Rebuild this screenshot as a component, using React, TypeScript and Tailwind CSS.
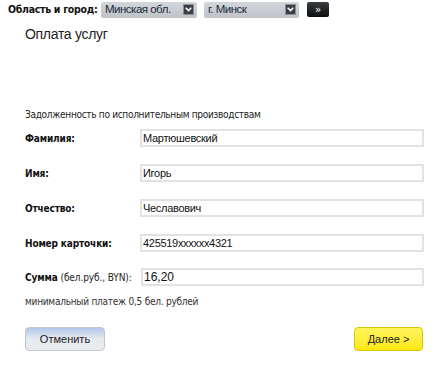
import { useState } from "react";

const fields = [
  { label: "Фамилия:", value: "Мартюшевский" },
  { label: "Имя:", value: "Игорь" },
  { label: "Отчество:", value: "Чеславович" },
  { label: "Номер карточки:", value: "425519xxxxxx4321" },
];

function Select({ value, width }: { value: string; width: string }) {
  return (
    <div
      className={`${width} h-[16px] shrink-0 flex items-center justify-between rounded-[2px] bg-gradient-to-b from-[#d3d6da] to-[#bfc3c8] pl-[4px] pr-[3px]`}
    >
      <span className="text-[11.5px] leading-none text-[#1c2a3a] font-['Liberation_Sans',sans-serif] tracking-[-0.5px]">
        {value}
      </span>
      <span className="w-[11px] h-[11px] bg-[#3a3f45] border border-[#8a8f95] flex items-center justify-center">
        <svg width="7" height="5" viewBox="0 0 7 5">
          <path d="M0.7 0.7 L3.5 3.6 L6.3 0.7" stroke="#fff" strokeWidth="1.5" fill="none" />
        </svg>
      </span>
    </div>
  );
}

export default function App() {
  const [sum, setSum] = useState("16,20");

  return (
    <div className="w-[435px] h-[380px] bg-white font-['DejaVu_Sans_Condensed','DejaVu_Sans',sans-serif] text-[#222]">
      <div className="flex items-center pt-[1px] pl-[8px] h-[18px]">
        <span className="shrink-0 whitespace-nowrap text-[10.5px] font-bold text-[#111] tracking-[-0.3px] w-[93px]">
          Область и город:
        </span>
        <Select value="Минская обл." width="w-[96px]" />
        <div className="w-[7px] shrink-0" />
        <Select value="г. Минск" width="w-[95px]" />
        <div className="w-[8px] shrink-0" />
        <div className="shrink-0 w-[22px] h-[15px] rounded-[2px] bg-gradient-to-b from-[#3a3d42] to-[#0c0d0f] flex items-center justify-center text-white text-[11px] leading-none">
          »
        </div>
      </div>

      <h1 className="pl-[25px] mt-[7px] text-[14px] tracking-[-0.3px] font-['Liberation_Sans',sans-serif] text-[#222] leading-[18px]">
        Оплата услуг
      </h1>

      <div className="pl-[25px] mt-[65px] text-[10px] tracking-[-0.3px] text-[#222] leading-[14px] whitespace-nowrap">
        Задолженность по исполнительным производствам
      </div>

      <div className="pl-[25px] pr-[11px] mt-[7px] flex flex-col gap-[17px]">
        {fields.map((f) => (
          <div key={f.label} className="flex items-center h-[18px]">
            <span className="w-[115px] shrink-0 text-[10px] font-bold tracking-[-0.15px] text-[#111]">{f.label}</span>
            <input
              readOnly
              value={f.value}
              className="flex-1 min-w-0 h-[18px] border-2 border-[#e2e2e2] px-[1px] text-[11px] tracking-[-0.3px] text-[#111] font-['Liberation_Sans',sans-serif] outline-none"
            />
          </div>
        ))}
        <div className="flex items-center h-[18px] -mt-[1px]">
          <span className="w-[116px] shrink-0 whitespace-nowrap text-[10px] tracking-[-0.1px] text-[#222]">
            <b className="text-[#111]">Сумма</b> (бел.руб., BYN):
          </span>
          <input
            value={sum}
            onChange={(e) => setSum(e.target.value)}
            className="flex-1 min-w-0 h-[18px] border-2 border-[#e2e2e2] px-[1px] text-[12px] text-[#111] font-['Liberation_Sans',sans-serif] outline-none"
          />
        </div>
      </div>

      <div className="pl-[25px] mt-[9px] text-[10px] tracking-[-0.25px] text-[#333] leading-[14px]">
        минимальный платеж 0,5 бел. рублей
      </div>

      <div className="pl-[25px] pr-[12px] mt-[18px] flex justify-between">
        <button className="w-[80px] h-[24px] rounded-[4px] border border-[#c4c8ce] bg-gradient-to-b from-[#b3c6e8] via-[#e6e9ef] to-[#e9ebee] text-[11px] text-[#222] font-['Liberation_Sans',sans-serif]">
          Отменить
        </button>
        <button className="w-[69px] h-[24px] rounded-[4px] border border-[#d8c800] bg-gradient-to-b from-[#fff45a] to-[#ffe800] text-[11px] text-[#222] font-['Liberation_Sans',sans-serif]">
          Далее &gt;
        </button>
      </div>
    </div>
  );
}
